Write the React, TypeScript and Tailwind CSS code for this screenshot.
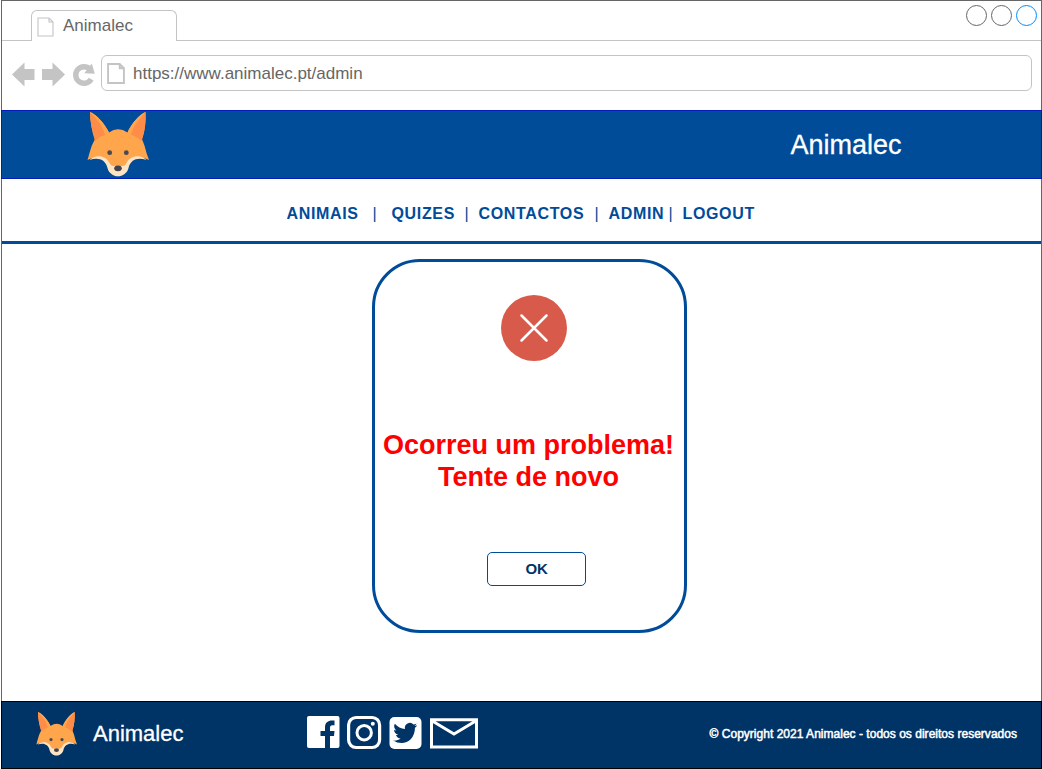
import React from "react";

function Fox({ className }: { className: string }) {
  return (
    <svg className={className} viewBox="0 0 62 65" preserveAspectRatio="none" aria-hidden="true">
      <path d="M3 0C9 2 17 11 22 20.5Q31 14 40.5 20.5C45 11 53 2 58.5 0C59 9 58 19 55 27Q58 34 59.5 41L62 48C56 45 48 44 43 49L31 60L19 49C14 44 6 45 .5 48L2.5 41Q4 34 8 27C5 19 3 9 3 0Z" fill="#ffa64d" />
      <path d="M3 0C9 6 16 14 18.5 22.5C14 24 11 26 8 29C5 20 3 9 3 0ZM58.5 0C53 6 46 14 43.5 22.5C48 24 51 26 54.5 29C58 20 59 9 58.5 0Z" fill="#ff8c47" />
      <path d="M3 0C10 3 18 12 22 20.5L18 23C16 14 10 7 3 0ZM58.5 0C52 3 44 12 40.5 20.5L44 23C46 14 52 7 58.5 0Z" fill="#ffa64d" />
      <path d="M2.5 48C8 42 19 43 22.5 51C24.5 55 27 54 31 54C35 54 37.5 55 39.5 51C43 43 54 42 59.5 48C50 45 43.5 48 41.5 56C40.5 61 35.5 64.3 31 64.3C26.5 64.3 21.5 61 20.5 56C18.5 48 12 45 2.5 48Z" fill="#ffe3c2" />
      <circle cx="22.7" cy="40.7" r="2.4" fill="#4a4a50" />
      <circle cx="39.3" cy="40.7" r="2.4" fill="#4a4a50" />
      <ellipse cx="31" cy="56.3" rx="3.8" ry="2.9" fill="#45444d" />
    </svg>
  );
}

function PageIcon({ className, stroke }: { className: string; stroke: number }) {
  return (
    <svg className={className} viewBox="0 0 17 20" preserveAspectRatio="none" fill="none" stroke="#c4c4c4" strokeWidth={stroke} aria-hidden="true">
      <path d="M1 1H12L16 5V19H1ZM12 1V5H16" />
    </svg>
  );
}

function BrowserBar() {
  return (
    <>
      <div className="flex h-10 shrink-0 justify-between">
        <div className="flex">
          <div className="w-[29px] border-b border-[#c4c4c4]" />
          <div className="mt-[9px] flex h-[31px] w-[146px] rounded-t-[6px] border border-b-0 border-[#c4c4c4] pl-[5px]">
            <PageIcon className="mt-[6px] h-[20px] w-[17px]" stroke={1.1} />
            <span className="ml-[9px] text-[17px] leading-[29px] text-[#666]">Animalec</span>
          </div>
        </div>
        <div className="flex flex-1 justify-end gap-[4px] border-b border-[#c4c4c4] pr-[4px] pt-[4px]">
          <span className="size-[21px] rounded-full border border-[#666]" />
          <span className="size-[21px] rounded-full border border-[#666]" />
          <span className="size-[21px] rounded-full border border-[#008cff]" />
        </div>
      </div>
      <div className="flex h-[69px] shrink-0 pl-[10px] pr-[9px] pt-[14px]">
        <svg className="h-[38px] w-[89px] shrink-0" viewBox="12 55 89 38" fill="#c4c4c4" aria-hidden="true">
          <path d="M12 74.5L24.5 62.5V69H34.5V80H24.5V86.5ZM65 74.5L52.5 62.5V69H42V80H52.5V86.5Z" />
          <path d="M90 69.2A8.3 8.3 0 1 0 91.2 79.2" fill="none" stroke="#c4c4c4" strokeWidth="5.4" />
          <path d="M91.8 63.6L94.8 73.8L84.3 73.3Z" />
        </svg>
        <div className="flex h-[36px] flex-1 rounded-[6px] border border-[#c4c4c4] pl-[5px]">
          <PageIcon className="mt-[7px] h-[21px] w-[18px]" stroke={1.8} />
          <span className="ml-[8px] text-[17px] leading-[36px] text-[#666]">https://www.animalec.pt/admin</span>
        </div>
      </div>
    </>
  );
}

function NavBar() {
  return (
    <nav className="flex h-[65px] shrink-0 whitespace-pre border-b-[3px] border-[#004c99] pl-[284.5px] text-[16px] font-bold leading-[70px] tracking-[0.65px] text-[#004c99]">
      <a className="w-[86px]">ANIMAIS</a><span className="w-[19px] font-normal">|</span>
      <a className="w-[73px]">QUIZES</a><span className="w-[14px] font-normal">|</span>
      <a className="w-[116px]">CONTACTOS</a><span className="w-[14px] font-normal">|</span>
      <a className="w-[60px]">ADMIN</a><span className="w-[14px] font-normal">|</span>
      <a>LOGOUT</a>
    </nav>
  );
}

function ErrorCard() {
  return (
    <section className="ml-[370px] mt-[15px] flex h-[374px] w-[315px] flex-col items-center rounded-[48px] border-[3px] border-[#004c99]">
      <svg className="ml-[9px] mt-[33px] size-[66px] shrink-0" viewBox="0 0 66 66" aria-hidden="true">
        <circle cx="33" cy="33" r="33" fill="#d75a4a" />
        <path d="M20.5 20.5L45.5 45.5M45.5 20.5L20.5 45.5" stroke="white" strokeWidth="2.5" strokeLinecap="round" />
      </svg>
      <h1 className="mr-[2px] mt-[68px] whitespace-nowrap text-center text-[27px] font-bold leading-[32px] text-[#ff0000]">
        Ocorreu um problema!<br />Tente de novo
      </h1>
      <button className="ml-[14px] mt-[59px] h-[34px] w-[99px] rounded-[5px] border border-[#004c99] text-[15px] font-bold leading-[32px] tracking-[-0.2px] text-[#003366]">OK</button>
    </section>
  );
}

function Social() {
  return (
    <div className="ml-[124px] mt-[13px] flex items-start">
      <svg className="h-[35px] w-[172px]" viewBox="307 715 172 35" aria-hidden="true">
        <rect x="307" y="716" width="32.5" height="32" rx="2" fill="white" />
        <path d="M325 748V736H320.5V731H325V727.5C325 722.5 328 720.5 332 720.5H334.5V725.2H332.5C330.5 725.2 330 726.2 330 728V731H334.5L334 736H330V748Z" fill="#003366" />
        <rect x="348.6" y="717.5" width="31" height="30" rx="7.5" fill="none" stroke="white" strokeWidth="3.2" />
        <circle cx="364.2" cy="732.7" r="7.2" fill="none" stroke="white" strokeWidth="3" />
        <circle cx="372.8" cy="723.7" r="2" fill="white" />
        <rect x="389.5" y="717" width="32" height="32" rx="5" fill="white" />
        <path transform="translate(392.6 722.8) scale(1.04 1.04)" d="M23.6 2.3c-.8.4-1.7.6-2.6.8.9-.6 1.6-1.4 2-2.5-.9.5-1.8.9-2.9 1.1a4.8 4.8 0 0 0-8.2 4.3C8.2 5.9 4.6 4 2.2 1 .8 3.1 1.5 6 3.6 7.4c-.7 0-1.5-.2-2.2-.6 0 2.3 1.6 4.4 3.9 4.8-.7.2-1.4.2-2.1.1.6 1.9 2.4 3.3 4.5 3.4-2 1.6-4.6 2.3-7.2 2 9.9 6.1 21 .1 21-12.3.9-.6 1.5-1.4 2.1-2.5Z" fill="#003366" />
        <path d="M431.5 719.8H476.5V747H431.5ZM431.5 720.5L454 734L476.5 720.5" fill="none" stroke="white" strokeWidth="3" />
      </svg>
    </div>
  );
}

export default function App() {
  return (
    <div className="h-[769px] w-[1042px] overflow-hidden bg-white pl-px font-['Liberation_Sans',Arial,sans-serif]">
      <div className="flex h-full flex-col border-l border-r border-t border-[#666]">
        <BrowserBar />
        <header className="-mx-px flex h-[69px] shrink-0 justify-between border border-[#001dbc] bg-[#004c99] pl-[85px] pr-[139.5px]">
          <Fox className="mt-px h-[65px] w-[62px]" />
          <span className="text-[27px] leading-[68px] text-white [-webkit-text-stroke:0.3px_white]">Animalec</span>
        </header>
        <NavBar />
        <main className="min-h-0 flex-1"><ErrorCard /></main>
        <footer className="-mx-px flex h-[68px] shrink-0 whitespace-nowrap border border-black bg-[#003366] pl-[34px] text-white">
          <Fox className="mt-[10px] h-[44px] w-[41px]" />
          <span className="ml-[16px] text-[22px] leading-[63px] [-webkit-text-stroke:0.3px_white]">Animalec</span>
          <Social />
          <span className="ml-auto mr-[24px] text-[12px] leading-[65px] tracking-[0.02px] [-webkit-text-stroke:0.5px_white]">© Copyright 2021 Animalec - todos os direitos reservados</span>
        </footer>
      </div>
    </div>
  );
}
